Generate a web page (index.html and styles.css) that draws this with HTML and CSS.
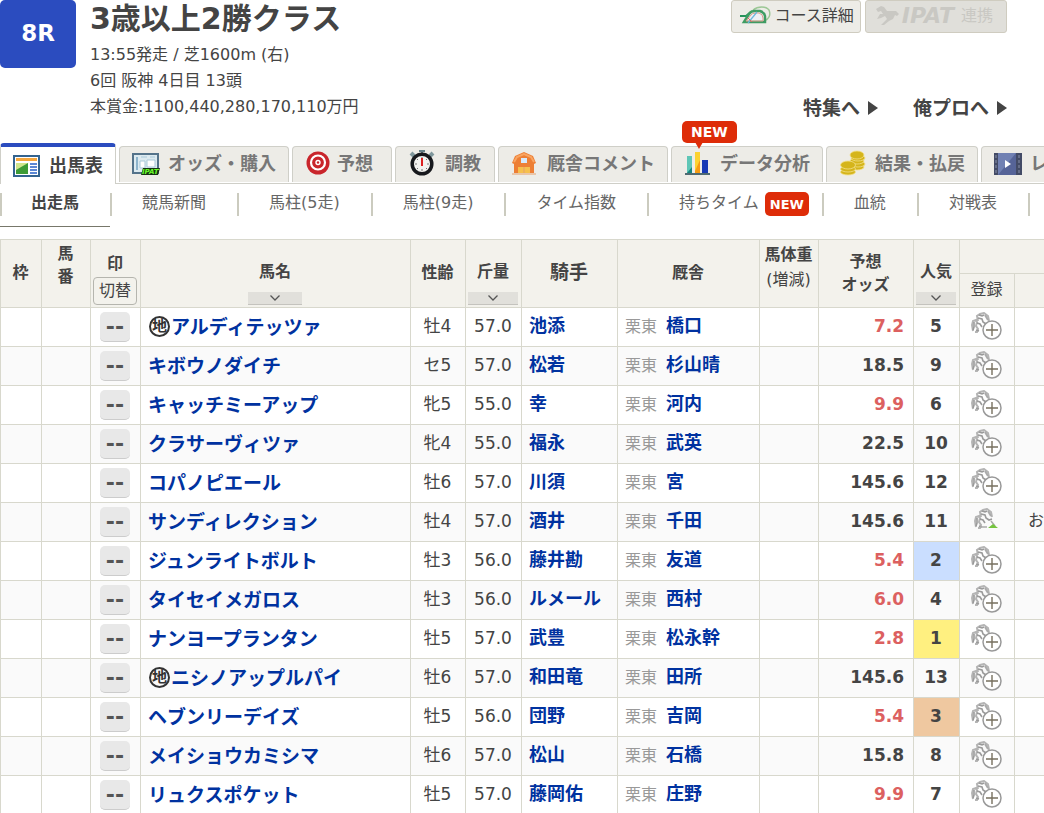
FILE: index.html
```html
<!DOCTYPE html>
<html lang="ja">
<head>
<meta charset="utf-8">
<title>8R 3歳以上2勝クラス 出馬表</title>
<link rel="stylesheet" href="styles.css">
</head>
<body>
<svg class="sprite" aria-hidden="true">
  <symbol id="horse" viewBox="0 0 24 22">
    <path d="M2 19 1 13 2 9 5 8 6 10 5 14 7 17 6 20 4 20M7 9 6 4 9 2 13 1 17 4 18 9" fill="none" stroke="#b4b4b4" stroke-width="2"/>
    <path d="M8 3 11 4 13 3M7 6 11 7 12 10 15 12 18 11M3 10v5l-1 3M6 11l3 1 2 3M5 18l3 1" fill="none" stroke="#9a9a9a" stroke-width="1.600"/>
    <path d="m14 3 3 5" stroke="#aaa" stroke-width="2"/>
  </symbol>
  <symbol id="register" viewBox="0 0 32 28">
    <use href="#horse" width="24" height="22"/>
    <circle cx="21" cy="18" r="9" fill="#fff" stroke="#999" stroke-width="1.500"/>
    <path d="M21 12v12M15 18h12" stroke="#77705f" stroke-width="1.400"/>
  </symbol>
  <symbol id="registered" viewBox="0 0 32 28">
    <use href="#horse" x="3" y="1" width="24" height="22"/>
    <path d="m20 14 4 5M9 20h7" stroke="#aaa" stroke-width="1.500"/>
    <path d="m17 21 5-4 5 4z" fill="#75c43f"/>
  </symbol>
  <symbol id="chevron" viewBox="0 0 12 8"><path d="m1.500 1.500 4.500 4.500 4.500-4.500" fill="none" stroke="#555" stroke-width="1.300"/></symbol>
</svg>

<header class="race">
  <div class="race-number">8R</div>
  <div class="race-info">
    <h1>3歳以上2勝クラス</h1>
    <p>13:55発走 / 芝1600m (右)</p>
    <p>6回 阪神 4日目 13頭</p>
    <p>本賞金:1100,440,280,170,110万円</p>
  </div>
  <div class="race-side">
    <div class="actions">
      <button class="action" type="button">
        <svg width="32" height="20" viewBox="0 0 32 20" fill="none"><path d="M14 4c5-4 13-4 16 0 2 5 0 9-5 11" stroke="#9cc795" stroke-width="1.500"/><path d="M1 10h6l6-5" stroke="#27945c" stroke-width="2"/><path d="M5 16 10 8q2-3 6-3h5q4 1 5 5v6z" fill="#edf0f4" stroke="#3f9c63" stroke-width="2.500"/><path d="m7 15 5-6q1-2 5-2h3q4 1 4 5v3z" stroke="#de9b8b"/><path d="m9 17 9-11" stroke="#69b6dd" stroke-width="1.200"/><path d="m9 12 4 4" stroke="#d66"/></svg>
        <span>コース詳細</span>
      </button>
      <button class="action action-off" type="button" disabled>
        <svg width="24" height="22" viewBox="0 0 24 22"><path d="m1 4 5-3 3 1 3 4h9l3 3-2 2-2-1-2 4-4 2-5 4H6l6-6-2-3-4 2-4 1 3-5h3L6 6 3 7z" fill="#c9c8c3"/></svg>
        <b>IPAT</b><span>連携</span>
      </button>
    </div>
    <nav class="links">
      <a href="#feature">特集へ<i class="arrow"></i></a>
      <a href="#orepro">俺プロへ<i class="arrow"></i></a>
    </nav>
  </div>
</header>

<nav class="tabs">
  <a class="tab tab-on" href="#entries"><svg class="icon" viewBox="0 0 28 28"><rect x="1" y="4" width="25" height="20" fill="#fff" stroke="#33638f" stroke-width="2"/><path d="M3 6h21v3H3z" fill="#f5a63c"/><path d="M3 11h12v11H3z" fill="#cfe58c"/><path d="m3 18 12-7v11H3z" fill="#3d9b35"/><path d="M17 12h7M17 15h7M17 18h7M17 21h7" stroke="#5b87d4" stroke-width="2"/></svg>出馬表</a>
  <a class="tab" href="#odds"><svg class="icon" viewBox="0 0 28 28"><rect x="1" y="4" width="25" height="19" fill="#dceaf0" stroke="#54738a" stroke-width="2"/><path d="M5 7v13" stroke="#8db4cc" stroke-width="2"/><path d="M9 7h6M18 7h5M8 11h5v7H8zM15 10h8v7h-8z" stroke="#a9c9da" fill="#fff"/><path d="M11 18h17l-2 7H9z" fill="#173313"/><text x="10" y="24" class="icon-text">IPAT</text></svg>オッズ・購入</a>
  <a class="tab tab-close" href="#predict"><svg class="icon" viewBox="0 0 28 28"><circle cx="13" cy="13" r="11.500" fill="#c9252b"/><circle cx="13" cy="12.500" r="7" fill="none" stroke="#fff" stroke-width="2.200"/><circle cx="13" cy="12.500" r="2.700" fill="#fff"/><circle cx="13" cy="12.500" r="1.200" fill="#c9252b"/></svg>予想</a>
  <a class="tab" href="#training"><svg class="icon" viewBox="0 0 28 28"><path d="M13 1v4M10 1h6" stroke="#668087" stroke-width="2"/><path d="m2 3 4 4M24 3l-4 4" stroke="#7f979c" stroke-width="4"/><circle cx="13" cy="14" r="9.800" fill="#f4f4f1" stroke="#17191d" stroke-width="3.500"/><path d="M13 7v2M13 19v2M6 14h2M18 14h2M8 9l1 1M18 9l-1 1M8 19l1-1M18 19l-1-1" stroke="#777"/><path d="M13 8v8" stroke="#d22" stroke-width="2"/></svg>調教</a>
  <a class="tab" href="#comments"><svg class="icon" viewBox="0 0 28 28"><path d="M1 13 4 6l9-4 9 4 3 7-2 1v9H3v-9z" fill="#ed7f35"/><path d="m3 12 3-5 7-3 7 3 3 5" fill="none" stroke="#f9a562" stroke-width="2"/><path d="M10 8h6v5h-6z" fill="#d7e9fb"/><path d="M7 17h12v6H7z" fill="#f6c04d"/><path d="M1 24h24M13 17v6" stroke="#e5a06d"/></svg>厩舎コメント</a>
  <a class="tab" href="#data"><span class="bubble">NEW</span><svg class="icon" viewBox="0 0 28 28"><path d="M3 6h5v17H3z" fill="#5fc6b6"/><path d="m3 23 5-6v6z" fill="#15857e"/><path d="M11 2h5v21h-5z" fill="#fcd231"/><path d="m11 21 5-11v13h-5z" fill="#f59c13"/><path d="M18 10h6v13h-6z" fill="#1639b5"/><path d="M1 24h25" stroke="#183f4b" stroke-width="1.500"/></svg>データ分析</a>
  <a class="tab" href="#result"><svg class="icon" viewBox="0 0 28 28"><g fill="#d5b51b" stroke="#f3e08a" stroke-width=".8"><ellipse cx="18" cy="17" rx="7" ry="3"/><ellipse cx="19" cy="14" rx="7" ry="3"/><ellipse cx="18" cy="11" rx="7" ry="3"/><ellipse cx="19" cy="8" rx="7" ry="3"/><ellipse cx="18" cy="5" rx="7" ry="4"/><ellipse cx="9" cy="22" rx="7.500" ry="3"/><ellipse cx="9" cy="19" rx="7.500" ry="3"/><ellipse cx="9" cy="15" rx="7.500" ry="4"/></g></svg>結果・払戻</a>
  <a class="tab tab-last" href="#movie"><svg class="icon" viewBox="0 0 28 28"><path d="M0 3h28v22H0z" fill="#434b66"/><path d="M4 3h18v22H4z" fill="#7181b3"/><path d="M22 3v22H4z" fill="#566498"/><path d="M2 5v18M25 5v18" stroke="#666e88" stroke-width="2" stroke-dasharray="3 2"/><path d="m11 10 6 4-6 4z" fill="#fff"/></svg>レ</a>
</nav>

<nav class="subtabs">
  <a class="on" href="#runners">出走馬</a>
  <a href="#paper">競馬新聞</a>
  <a href="#past5">馬柱(5走)</a>
  <a href="#past9">馬柱(9走)</a>
  <a href="#index">タイム指数</a>
  <a class="with-new" href="#time">持ちタイム<span class="new">NEW</span></a>
  <a href="#blood">血統</a>
  <a href="#versus">対戦表</a>
  <span class="end"></span>
</nav>

<main class="table-area">
<table>
  <colgroup><col class="c41"><col class="c49"><col class="c50"><col class="c270"><col class="c55"><col class="c56"><col class="c96"><col class="c142"><col class="c59"><col class="c95"><col class="c46"><col class="c55"><col></colgroup>
  <thead>
    <tr>
      <th rowspan="2">枠</th>
      <th rowspan="2" class="top">馬<br>番</th>
      <th rowspan="2" class="low">印<button class="switch" type="button">切替</button></th>
      <th rowspan="2" class="low">馬名<button class="sort" type="button" aria-label="馬名で並べ替え"><svg width="12" height="8"><use href="#chevron"/></svg></button></th>
      <th rowspan="2">性齢</th>
      <th rowspan="2" class="low">斤量<button class="sort" type="button" aria-label="斤量で並べ替え"><svg width="12" height="8"><use href="#chevron"/></svg></button></th>
      <th rowspan="2" class="big">騎手</th>
      <th rowspan="2">厩舎</th>
      <th rowspan="2" class="top tall">馬体重<br><small>(増減)</small></th>
      <th rowspan="2">予想<br>オッズ</th>
      <th rowspan="2" class="low">人気<button class="sort" type="button" aria-label="人気で並べ替え"><svg width="12" height="8"><use href="#chevron"/></svg></button></th>
      <th colspan="2"></th>
    </tr>
    <tr><th><small>登録</small></th><th></th></tr>
  </thead>
  <tbody>
    <tr><td></td><td></td><td><button class="mark" type="button">--</button></td><td class="name"><span class="local">地</span><a href="#h1">アルディテッツァ</a></td><td>牡4</td><td>57.0</td><td class="person"><a href="#j1">池添</a></td><td class="person"><span>栗東</span><a href="#t1">橋口</a></td><td></td><td class="odds hot">7.2</td><td class="rank">5</td><td><button class="reg" type="button" aria-label="登録"><svg width="32" height="28"><use href="#register"/></svg></button></td><td class="memo"></td></tr>
    <tr><td></td><td></td><td><button class="mark" type="button">--</button></td><td class="name"><a href="#h2">キボウノダイチ</a></td><td>セ5</td><td>57.0</td><td class="person"><a href="#j2">松若</a></td><td class="person"><span>栗東</span><a href="#t2">杉山晴</a></td><td></td><td class="odds">18.5</td><td class="rank">9</td><td><button class="reg" type="button" aria-label="登録"><svg width="32" height="28"><use href="#register"/></svg></button></td><td class="memo"></td></tr>
    <tr><td></td><td></td><td><button class="mark" type="button">--</button></td><td class="name"><a href="#h3">キャッチミーアップ</a></td><td>牝5</td><td>55.0</td><td class="person"><a href="#j3">幸</a></td><td class="person"><span>栗東</span><a href="#t3">河内</a></td><td></td><td class="odds hot">9.9</td><td class="rank">6</td><td><button class="reg" type="button" aria-label="登録"><svg width="32" height="28"><use href="#register"/></svg></button></td><td class="memo"></td></tr>
    <tr><td></td><td></td><td><button class="mark" type="button">--</button></td><td class="name"><a href="#h4">クラサーヴィツァ</a></td><td>牝4</td><td>55.0</td><td class="person"><a href="#j4">福永</a></td><td class="person"><span>栗東</span><a href="#t4">武英</a></td><td></td><td class="odds">22.5</td><td class="rank">10</td><td><button class="reg" type="button" aria-label="登録"><svg width="32" height="28"><use href="#register"/></svg></button></td><td class="memo"></td></tr>
    <tr><td></td><td></td><td><button class="mark" type="button">--</button></td><td class="name"><a href="#h5">コパノピエール</a></td><td>牡6</td><td>57.0</td><td class="person"><a href="#j5">川須</a></td><td class="person"><span>栗東</span><a href="#t5">宮</a></td><td></td><td class="odds">145.6</td><td class="rank">12</td><td><button class="reg" type="button" aria-label="登録"><svg width="32" height="28"><use href="#register"/></svg></button></td><td class="memo"></td></tr>
    <tr><td></td><td></td><td><button class="mark" type="button">--</button></td><td class="name"><a href="#h6">サンディレクション</a></td><td>牡4</td><td>57.0</td><td class="person"><a href="#j6">酒井</a></td><td class="person"><span>栗東</span><a href="#t6">千田</a></td><td></td><td class="odds">145.6</td><td class="rank">11</td><td><button class="reg" type="button" aria-label="登録済み"><svg width="32" height="28"><use href="#registered"/></svg></button></td><td class="memo">お</td></tr>
    <tr><td></td><td></td><td><button class="mark" type="button">--</button></td><td class="name"><a href="#h7">ジュンライトボルト</a></td><td>牡3</td><td>56.0</td><td class="person"><a href="#j7">藤井勘</a></td><td class="person"><span>栗東</span><a href="#t7">友道</a></td><td></td><td class="odds hot">5.4</td><td class="rank second">2</td><td><button class="reg" type="button" aria-label="登録"><svg width="32" height="28"><use href="#register"/></svg></button></td><td class="memo"></td></tr>
    <tr><td></td><td></td><td><button class="mark" type="button">--</button></td><td class="name"><a href="#h8">タイセイメガロス</a></td><td>牡3</td><td>56.0</td><td class="person"><a href="#j8">ルメール</a></td><td class="person"><span>栗東</span><a href="#t8">西村</a></td><td></td><td class="odds hot">6.0</td><td class="rank">4</td><td><button class="reg" type="button" aria-label="登録"><svg width="32" height="28"><use href="#register"/></svg></button></td><td class="memo"></td></tr>
    <tr><td></td><td></td><td><button class="mark" type="button">--</button></td><td class="name"><a href="#h9">ナンヨープランタン</a></td><td>牡5</td><td>57.0</td><td class="person"><a href="#j9">武豊</a></td><td class="person"><span>栗東</span><a href="#t9">松永幹</a></td><td></td><td class="odds hot">2.8</td><td class="rank first">1</td><td><button class="reg" type="button" aria-label="登録"><svg width="32" height="28"><use href="#register"/></svg></button></td><td class="memo"></td></tr>
    <tr><td></td><td></td><td><button class="mark" type="button">--</button></td><td class="name"><span class="local">地</span><a href="#h10">ニシノアップルパイ</a></td><td>牡6</td><td>57.0</td><td class="person"><a href="#j10">和田竜</a></td><td class="person"><span>栗東</span><a href="#t10">田所</a></td><td></td><td class="odds">145.6</td><td class="rank">13</td><td><button class="reg" type="button" aria-label="登録"><svg width="32" height="28"><use href="#register"/></svg></button></td><td class="memo"></td></tr>
    <tr><td></td><td></td><td><button class="mark" type="button">--</button></td><td class="name"><a href="#h11">ヘブンリーデイズ</a></td><td>牡5</td><td>56.0</td><td class="person"><a href="#j11">団野</a></td><td class="person"><span>栗東</span><a href="#t11">吉岡</a></td><td></td><td class="odds hot">5.4</td><td class="rank third">3</td><td><button class="reg" type="button" aria-label="登録"><svg width="32" height="28"><use href="#register"/></svg></button></td><td class="memo"></td></tr>
    <tr><td></td><td></td><td><button class="mark" type="button">--</button></td><td class="name"><a href="#h12">メイショウカミシマ</a></td><td>牡6</td><td>57.0</td><td class="person"><a href="#j12">松山</a></td><td class="person"><span>栗東</span><a href="#t12">石橋</a></td><td></td><td class="odds">15.8</td><td class="rank">8</td><td><button class="reg" type="button" aria-label="登録"><svg width="32" height="28"><use href="#register"/></svg></button></td><td class="memo"></td></tr>
    <tr><td></td><td></td><td><button class="mark" type="button">--</button></td><td class="name"><a href="#h13">リュクスポケット</a></td><td>牡5</td><td>57.0</td><td class="person"><a href="#j13">藤岡佑</a></td><td class="person"><span>栗東</span><a href="#t13">庄野</a></td><td></td><td class="odds hot">9.9</td><td class="rank">7</td><td><button class="reg" type="button" aria-label="登録"><svg width="32" height="28"><use href="#register"/></svg></button></td><td class="memo"></td></tr>
  </tbody>
</table>
</main>
</body>
</html>
```
FILE: styles.css
```css
* { box-sizing: border-box; }
html { overflow: hidden; }
body {
  margin: 0;
  color: #444;
  background: #fff;
  font: 16px/26px "DejaVu Sans", "Noto Sans CJK JP", sans-serif;
}
a { color: inherit; text-decoration: none; }
button { font: inherit; color: inherit; padding: 0; margin: 0; }
.sprite { display: block; width: 0; height: 0; }

.race { display: flex; align-items: flex-start; min-height: 143px; }
.race-number {
  width: 76px; line-height: 66px; padding-bottom: 2px;
  border-radius: 5px; background: #2b4cbf; color: #fff;
  text-align: center; font-size: 23px; font-weight: bold;
}
.race-info { flex: 1; padding: 0 0 20px 14px; }
.race-info h1 { margin: 0 0 4px; font-size: 30px; line-height: 38px; }
.race-info p { margin: 0; }
.race-side { padding-right: 37px; }
.actions { display: flex; gap: 4px; justify-content: flex-end; }
.action {
  display: flex; align-items: center; gap: 4px; height: 33px; padding: 0 6px 2px 7px;
  border: 1px solid #cfccc0; border-radius: 3px; background: #edece7; white-space: nowrap;
}
.action-off { background: #e0dfda; color: #c9c8c3; padding: 0 13px 2px 9px; gap: 3px; }
.action-off b { font: italic bold 22px "DejaVu Sans", sans-serif; margin-right: 4px; }
.links { display: flex; justify-content: flex-end; gap: 35px; margin-top: 62px; font-size: 19px; font-weight: bold; }
.links a { display: flex; align-items: center; gap: 8px; }
.arrow { border: 7px solid transparent; border-left: 10px solid #444; border-right: 0; }

.tabs {
  display: flex; align-items: flex-end; gap: 3px; height: 41px; padding-bottom: 1px;
  border-bottom: 1px solid #cfcfc8; overflow-x: clip;
}
.tab {
  position: relative; display: flex; flex: none; align-items: center; justify-content: center; gap: 8px;
  min-width: 100px; height: 36px; padding: 0 12px 2px;
  border: 1px solid #cfcfc8; border-bottom: 0; border-radius: 4px 4px 0 0;
  background: #edece7; color: #777; font-size: 18px; font-weight: bold; white-space: nowrap;
}
.tab-on {
  height: 41px; margin-bottom: -2px; padding-top: 2px; border-top: 4px solid #2b4cbf;
  background: #fff; color: #444;
}
.tab-close { gap: 4px; padding-right: 18px; }
.tab-last { padding-right: 90px; }
.icon { flex: none; width: 28px; height: 28px; }
.icon-text { font: italic bold 7px "DejaVu Sans", sans-serif; fill: #6aff2a; }
.bubble {
  position: absolute; left: 10px; top: -26px; padding: 0 9px;
  border-radius: 5px; background: #de2c08; color: #fff; font-size: 14px; line-height: 22px;
}
.bubble::after {
  content: ""; position: absolute; left: 13px; top: 21px;
  border: 4px solid transparent; border-top: 7px solid #de2c08; border-bottom: 0;
}

.subtabs { display: flex; height: 55px; color: #666; overflow-x: clip; }
.subtabs a, .end {
  position: relative; display: flex; flex: none; height: 43px; padding: 6px 31px 0 32px; white-space: nowrap;
}
.subtabs a::before, .end::before {
  content: ""; position: absolute; left: 0; top: 9px; width: 2px; height: 23px; background: #cbcbbf;
}
.subtabs .on { padding-left: 31px; border-bottom: 1px solid #77776a; color: #444; font-weight: bold; }
.subtabs .with-new { gap: 6px; padding-right: 13px; }
.new {
  height: 24px; margin-top: 2px; padding: 0 5px; border-radius: 5px; background: #de2c08; color: #fff;
  font-size: 13px; line-height: 25px; font-weight: bold;
}

.table-area { overflow: hidden; }
table { width: 100%; min-width: 1044px; table-layout: fixed; border-collapse: separate; border-spacing: 0; border-top: 1px solid #d8d8cd; }
.c41 { width: 41px; } .c46 { width: 46px; } .c49 { width: 49px; } .c50 { width: 50px; }
.c55 { width: 55px; } .c56 { width: 56px; } .c59 { width: 59px; } .c95 { width: 95px; }
.c96 { width: 96px; } .c142 { width: 142px; } .c270 { width: 270px; }
th, td {
  padding: 0 1px 0 0; border-left: 1px solid #d8d8cd; border-bottom: 1px solid #d8d8cd;
  text-align: center; white-space: nowrap;
}
th { height: 34px; background: #f3f2ec; font-size: 16px; line-height: 23px; padding-bottom: 2px; }
th small { font-size: 16px; font-weight: normal; }
.top { vertical-align: top; padding-top: 2px; }
.tall { line-height: 25px; }
.low { vertical-align: bottom; }
.big { font-size: 19px; }
.sort {
  display: flex; align-items: center; justify-content: center;
  width: calc(100% - 4px); max-width: 54px; height: 13px; margin: 9px auto 0;
  border: 0; border-bottom: 1px solid #c4c3be; background: #e1e0db;
}
.switch {
  display: block; width: 44px; height: 28px; margin: 2px auto 0; border: 1px solid #b5b5ae;
  border-radius: 4px; background: transparent; line-height: 24px; font-weight: normal;
}
td { height: 39px; padding-bottom: 2px; font-size: 17px; line-height: 30px; }
tbody tr:nth-child(even) { background: #fafafa; }
.mark {
  display: block; width: 30px; height: 30px; margin: 2px auto 0; border: 0; border-bottom: 1px solid #ccc;
  border-radius: 5px; background: #e8e8e8; color: #555; font-size: 22px; font-weight: bold; line-height: 24px;
}
.name, .person { padding-left: 7px; text-align: left; font-weight: bold; }
.name { font-size: 19px; }
.person { font-size: 18px; }
.name a, .person a { color: #0032a0; }
.person span { margin-right: 9px; color: #999; font-size: 16px; font-weight: normal; }
.local {
  display: inline-flex; align-items: center; justify-content: center;
  width: 21px; height: 21px; margin: 0 1px; border: 2px solid #333; border-radius: 50%;
  color: #333; font-size: 15px; line-height: 17px; vertical-align: middle;
}
.name a { vertical-align: middle; }
.odds { padding-right: 9px; text-align: right; font-weight: bold; }
.hot { color: #dc6060; }
.rank { font-weight: bold; }
.first { background: #fff080; }
.second { background: #cadeff; }
.third { background: #efc8a0; }
.reg { display: block; width: 32px; height: 28px; margin: 0 auto; border: 0; background: transparent; }
.reg svg { display: block; }
.memo { padding-left: 13px; text-align: left; font-size: 16px; }
```
